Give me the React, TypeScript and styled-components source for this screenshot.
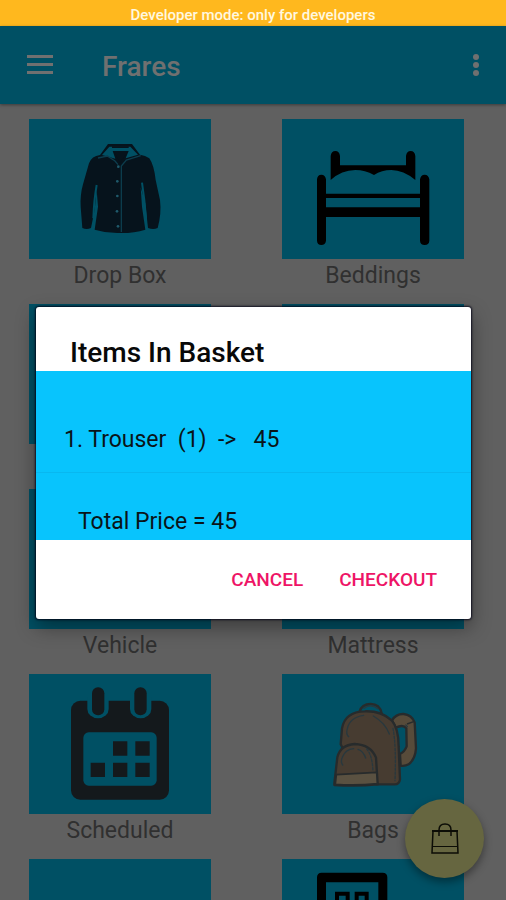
import React from "react";
import styled, { createGlobalStyle } from "styled-components";

const GlobalStyle = createGlobalStyle`
  * { box-sizing: border-box; }
  body { margin: 0; background: #606060; font-family: Roboto, "Noto Sans", sans-serif; }
  button { font-family: inherit; border: 0; padding: 0; cursor: pointer; }
`;

const Screen = styled.div`
  position: relative;
  display: flex;
  flex-direction: column;
  height: 100vh;
  overflow: hidden;
  background: #606060;
`;

const Banner = styled.div`
  flex: none;
  height: 26px;
  line-height: 30px;
  background: #ffb81e;
  color: #fff8e0;
  font-size: 15px;
  font-weight: 500;
  text-align: center;
`;

const Toolbar = styled.header`
  flex: none;
  display: flex;
  align-items: center;
  height: 78px;
  padding: 0 18px 0 20px;
  background: #005064;
  color: #707070;
  box-shadow: 0 1px 3px rgba(0, 0, 0, 0.4);
`;

const AppTitle = styled.h1`
  flex: 1;
  margin: 0 0 0 42px;
  padding-top: 4px;
  font-size: 28px;
  line-height: 40px;
  font-weight: 500;
`;

const IconButton = styled.button<{ $width: number }>`
  display: flex;
  align-items: center;
  justify-content: center;
  width: ${(p) => p.$width}px;
  height: 40px;
  background: none;
  color: inherit;
`;

const Catalog = styled.main`
  flex: 1;
  min-height: 0;
  overflow: hidden;
  display: grid;
  grid-template-columns: 1fr 1fr;
  grid-auto-rows: 185px;
  padding-top: 15px;
`;

const Category = styled.a`
  display: block;
  padding: 0 42px 0 29px;
  color: #303030;
  text-align: center;
  text-decoration: none;
`;

const Tile = styled.div`
  height: 140px;
  background: #005064;

  svg {
    display: block;
    width: 100%;
    height: 100%;
  }
`;

const CategoryName = styled.div`
  font-size: 23px;
  line-height: 34px;
`;

const BasketButton = styled.button`
  position: absolute;
  right: 22px;
  bottom: 22px;
  width: 79px;
  height: 79px;
  display: flex;
  align-items: center;
  justify-content: center;
  border-radius: 50%;
  background: #666640;
  box-shadow: 0 4px 8px rgba(0, 0, 0, 0.4);
`;

const Overlay = styled.div`
  position: absolute;
  inset: 26px 0 0;
  display: flex;
  align-items: center;
  padding: 0 35px 0 36px;
`;

const Dialog = styled.section`
  flex: 1;
  overflow: hidden;
  border-radius: 3px;
  background: #fff;
  color: #0a1418;
  box-shadow: 0 0 2px 1px rgba(0, 0, 20, 0.8), 0 8px 20px rgba(0, 0, 0, 0.4);
`;

const DialogTitle = styled.h2`
  margin: 0;
  padding: 28px 34px 0;
  font-size: 28px;
  line-height: 36px;
  font-weight: 500;
  color: #080808;
`;

const BasketList = styled.ul`
  margin: 0;
  padding: 0;
  list-style: none;
  background: #08c4fd;
  font-size: 23px;
  line-height: 34px;
`;

const BasketItem = styled.li`
  padding: 52px 28px 15px;
  border-bottom: 1px solid #08b8f0;
  white-space: pre;
`;

const BasketTotal = styled.li`
  padding: 32px 42px 1px;
`;

const Actions = styled.div`
  display: flex;
  justify-content: flex-end;
  gap: 36px;
  padding: 20px 34px 19px;
`;

const ActionButton = styled.button`
  background: none;
  color: #ee1466;
  font-size: 19px;
  line-height: 40px;
  font-weight: 500;
`;

const ShirtIcon = () => (
  <svg viewBox="27 27 546 420" aria-hidden="true">
    <path
      fill="#06131c"
      d="M240 135Q215 138 207 160L189 223Q180 255 182 290L187 354Q200 360 213 354L224 300L230 240L234 290L224 359Q260 370 298 369Q340 370 376 359L366 290L362 232L376 280L384 354Q400 360 413 354Q425 310 420 270L407 210Q402 165 388 145Q376 136 360 134L336 102H264Z"
    />
    <path fill="#005064" d="M246 135L268 110H331L354 134L317 145L326 123H278L286 146Z" />
    <path fill="#06131c" d="M276 109H326V114H276ZM283 126H322L300 158Z" />
    <path fill="none" stroke="#0c3c4c" strokeWidth="4" d="M234 144L262 138L285 153L294 164M362 137L319 150L304 168V366" />
    <path fill="none" stroke="#005064" strokeWidth="6" d="M230 225Q222 270 220 325M366 218Q374 270 378 325" />
    <g fill="#1f5a6b">
      <circle cx="295" cy="170" r="4" />
      <circle cx="292" cy="214" r="4" />
      <circle cx="292" cy="258" r="4" />
      <circle cx="291" cy="304" r="4" />
      <circle cx="294" cy="349" r="4" />
    </g>
  </svg>
);

const BedIcon = () => (
  <svg viewBox="36 27 546 420" aria-hidden="true">
    <path d="M182 138Q184 123 196 123T210 138V166H408V138Q410 123 422 123T436 138V210Q400 180 364 180Q335 180 312 195Q285 180 256 180Q215 180 182 210Z" />
    <path d="M141 208Q142 194 154 194T168 208V251H450V208Q452 194 464 194T478 208V392Q477 405 464 405T450 392V321H168V392Q166 405 154 405T141 392ZM168 264V292H450V264Z" fillRule="evenodd" />
  </svg>
);

const CalendarIcon = () => (
  <svg viewBox="27 27 546 420" aria-hidden="true">
    <rect x="153" y="107" width="294" height="297" rx="28" fill="#14191c" />
    <g fill="#005064">
      <path d="M202 96V132A32 28 0 0 0 266 132V96Z" />
      <path d="M330 96V132A32 28 0 0 0 394 132V96Z" />
    </g>
    <g fill="#14191c">
      <rect x="216" y="67" width="37" height="84" rx="18" />
      <rect x="343" y="67" width="37" height="84" rx="18" />
    </g>
    <rect x="190" y="202" width="220" height="160" rx="16" fill="#005064" />
    <path
      fill="#14191c"
      d="M279 229h43v43h-43zM346 229h43v43h-43zM212 293h43v43h-43zM279 293h43v43h-43zM346 293h43v43h-43z"
    />
  </svg>
);

const BackpackIcon = () => (
  <svg viewBox="36 27 546 420" aria-hidden="true">
    <g stroke="#272b2c" strokeWidth="7" strokeLinejoin="round" strokeLinecap="round">
      <path fill="none" d="M269 140Q275 117 302 117T335 145" />
      <path
        fill="#574b3a"
        d="M366 166Q378 146 401 147Q425 150 434 172L438 250Q436 282 416 298Q405 304 392 302L390 267Q404 260 410 244L409 190Q400 177 377 188Z"
      />
      <path fill="#473c31" d="M212 238L216 190Q225 140 284 139Q333 137 365 166Q386 190 386 245L390 343Q388 358 374 358H320L260 330Z" />
      <path fill="#473c31" d="M193 355L202 277Q211 240 254 237Q302 239 318 278L323 358Q259 365 193 360Z" />
      <path fill="#5a5141" strokeWidth="5" d="M199 329L320 322L322 356Q260 362 196 358Z" />
    </g>
    <g fill="none" stroke="#28383e" strokeWidth="4" strokeLinecap="round">
      <path d="M236 215Q227 207 232 191Q239 157 281 151M310 153Q346 174 358 207M282 130Q302 115 324 131" />
      <path d="M218 300Q211 290 217 277Q226 253 251 251M264 253Q280 258 287 279" />
      <path strokeDasharray="7 5" d="M369 190Q379 242 375 347M290 252Q307 270 309 320M412 185L406 178" />
    </g>
    <path fill="none" stroke="#272b2c" strokeWidth="4" d="M411 177L433 169" />
  </svg>
);

const ApplianceIcon = () => (
  <svg viewBox="36 580 546 420" aria-hidden="true">
    <path
      fillRule="evenodd"
      d="M155 621H338Q352 621 352 635V1000H141V635Q141 621 155 621ZM168 650V1000H325V650Z"
    />
    <path fill="none" stroke="#000" strokeWidth="12" d="M201 760V684H233V760M260 760V684H290V760" />
  </svg>
);

const categories: { name: string; icon?: React.ReactNode }[] = [
  { name: "Drop Box", icon: <ShirtIcon /> },
  { name: "Beddings", icon: <BedIcon /> },
  { name: "" },
  { name: "" },
  { name: "Vehicle" },
  { name: "Mattress" },
  { name: "Scheduled", icon: <CalendarIcon /> },
  { name: "Bags", icon: <BackpackIcon /> },
  { name: "" },
  { name: "", icon: <ApplianceIcon /> },
];

export default function App() {
  return (
    <>
      <GlobalStyle />
      <Screen>
        <Banner>Developer mode: only for developers</Banner>
        <Toolbar>
          <IconButton $width={40} aria-label="Open menu">
            <svg width="28" height="20" viewBox="0 0 28 20" fill="currentColor">
              <path d="M1 0h26v3H1zM1 8h26v3H1zM1 16h26v3H1z" />
            </svg>
          </IconButton>
          <AppTitle>Frares</AppTitle>
          <IconButton $width={24} aria-label="More options">
            <svg width="6" height="24" viewBox="0 0 6 24" fill="currentColor">
              <circle cx="3" cy="4" r="3" />
              <circle cx="3" cy="12" r="3" />
              <circle cx="3" cy="20" r="3" />
            </svg>
          </IconButton>
        </Toolbar>
        <Catalog>
          {categories.map((c, i) => (
            <Category key={i} href="#">
              <Tile>{c.icon}</Tile>
              <CategoryName>{c.name}</CategoryName>
            </Category>
          ))}
        </Catalog>
        <BasketButton aria-label="Basket">
          <svg width="30" height="34" viewBox="0 0 30 34" fill="none" stroke="#0c0d06">
            <path strokeWidth="1.500" d="M3 9L2 31H28L27 9" />
            <path strokeWidth="2" d="M2 9H28" />
            <path strokeWidth="1.500" d="M9 14V8Q9 2 15 2T21 8V14" />
            <path strokeWidth="1" d="M2 24.500H28" />
          </svg>
        </BasketButton>
        <Overlay>
          <Dialog role="dialog" aria-modal="true" aria-labelledby="basket-title">
            <DialogTitle id="basket-title">Items In Basket</DialogTitle>
            <BasketList>
              <BasketItem>{"1. Trouser  (1)  ->   45"}</BasketItem>
              <BasketTotal>Total Price = 45</BasketTotal>
            </BasketList>
            <Actions>
              <ActionButton>CANCEL</ActionButton>
              <ActionButton>CHECKOUT</ActionButton>
            </Actions>
          </Dialog>
        </Overlay>
      </Screen>
    </>
  );
}
